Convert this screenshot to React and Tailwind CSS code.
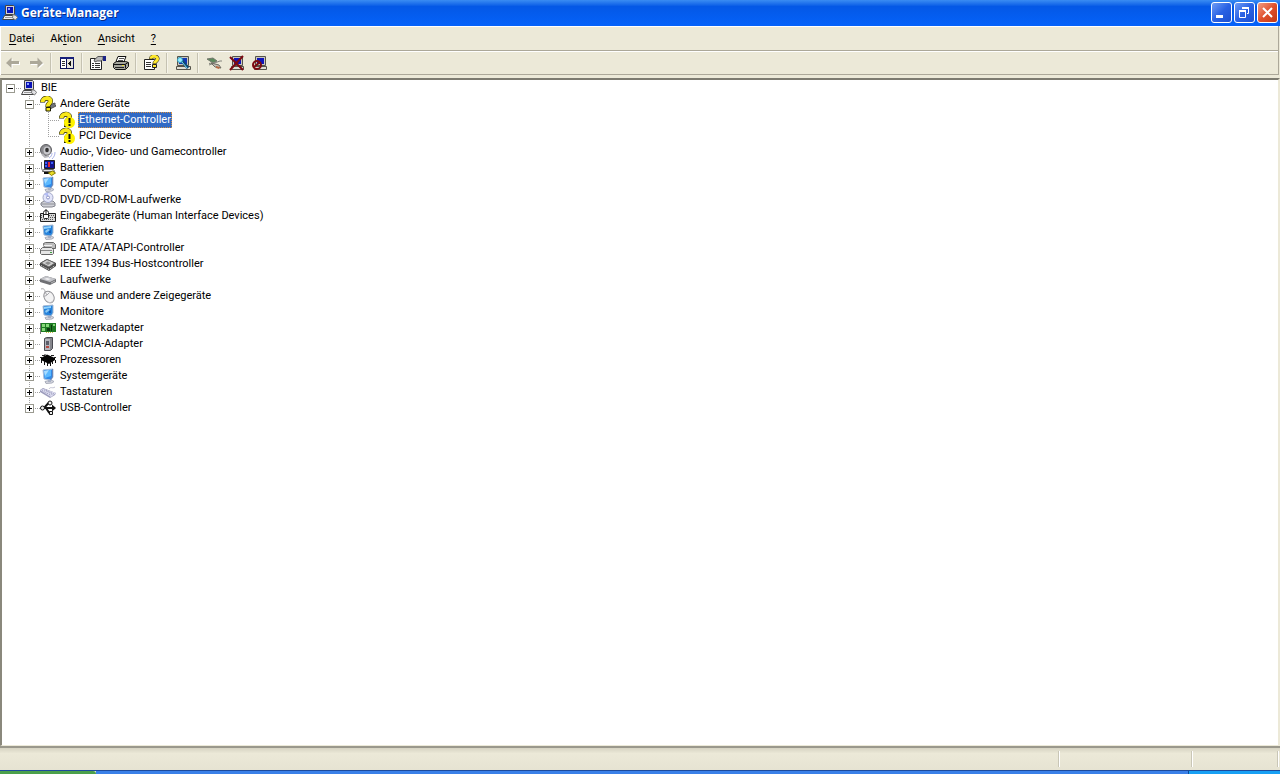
import { Fragment, useState } from "react"

const svgProps = { width: 16, height: 16, viewBox: "0 0 16 16", "aria-hidden": true, className: "block shrink-0" }

function PcIcon() {
  return (
    <svg {...svgProps}>
      <path d="M3.500 .5h8l1 1v8h-9z" fill="#d4d4d8" stroke="#444" />
      <path d="M5 2h6v6H5z" fill="#0a12b8" />
      <path d="M6 3h2v2H6z" fill="#8fa4ff" />
      <path d="M2.500 10.500h9l1.500 4H.5z" fill="#eeeef2" stroke="#444" />
      <path d="M3 12.500h8" stroke="#999" />
      <path d="M11 9.500l3 1 1.500 2-2 2.500-3-2z" fill="#e2e2e5" stroke="#777" />
    </svg>
  )
}

function UnknownIcon() {
  return (
    <svg {...svgProps}>
      <path d="M9 9l6-2v2l1 1-6 3z" fill="#70737c" stroke="#555" />
      <path d="M2.500 6.500C2.500 1 10.500 1 10.500 5C10.500 8 7.500 7 8 11" fill="none" stroke="#1c1c00" strokeWidth="5" />
      <path d="M6 11.500h4.500v3.500H6z" fill="#f8e71c" stroke="#1c1c00" />
      <path d="M2.500 6C2.500 1 10.500 1 10.500 5C10.500 8 7.500 7 8 10.500" fill="none" stroke="#f8e71c" strokeWidth="4" />
    </svg>
  )
}

function WarningIcon() {
  return (
    <svg {...svgProps} overflow="visible">
      <path d="M2.500 6.500C2.500 1 10.500 1 10.500 5C10.500 8 7.500 7 7.500 11V15" fill="none" stroke="#1c1c00" strokeWidth="5" />
      <path d="M2.500 6C2.500 1 10.500 1 10.500 5C10.500 8 7.500 7 7.500 11V14" fill="none" stroke="#f8e71c" strokeWidth="4" />
      <circle cx="10.500" cy="10.500" r="5.500" fill="#fff200" />
      <path d="M9.500 6h2v5h-2zM9.500 12h2v2h-2z" fill="#111" />
    </svg>
  )
}

function SpeakerIcon() {
  return (
    <svg {...svgProps}>
      <ellipse cx="6" cy="6" rx="5.500" ry="5.500" fill="#8b8b8f" stroke="#5c5c60" />
      <ellipse cx="7" cy="6.500" rx="3.500" ry="4" fill="#c8c8cc" />
      <ellipse cx="7" cy="6" rx="1.800" ry="2.200" fill="#333" />
      <path d="M2 10l3 3 4-1" fill="none" stroke="#b5b5ba" strokeWidth="2" />
      <path d="M9 14c2-1 3-3 3-5M12 15c2-2 3-4 3-7" fill="none" stroke="#a9b2e8" />
    </svg>
  )
}

function BatteryIcon() {
  return (
    <svg {...svgProps}>
      <path d="M1.500 2v6q0 3 3 3" fill="none" stroke="#777" />
      <path d="M4.500 .5h10v8h-10z" fill="#141490" stroke="#222" />
      <path d="M8 2h2v5H8z" fill="#e02838" />
      <path d="M5 2h2v2H5zM11 2h2v2h-2zM5 5h2v2H5z" fill="#3c64f8" />
      <path d="M3.500 9.500h10l1 2h-12z" fill="#e4e4e8" stroke="#666" />
      <path d="M4 13h5" stroke="#111" strokeWidth="2" />
      <path d="M8.500 13l4-2 3 2-4 2.500z" fill="#e8dc28" stroke="#8a7f00" />
    </svg>
  )
}

function StandShape() {
  return (
    <>
      <path d="M5 13.500l6-1.500 3 1.500-2 1.500-6 .5z" fill="#d5d7e0" stroke="#a9adbb" />
      <path d="M8 11h3v3H8z" fill="#aab0c2" />
    </>
  )
}

function MonitorIcon() {
  return (
    <svg {...svgProps}>
      <StandShape />
      <path d="M3 2l10-1v8l-2 3-7-1z" fill="#2f8ae8" stroke="#a7bddc" />
      <path d="M4 3l7-1v6l-6 2z" fill="#5ab8ff" />
      <path d="M4 3l5-1-4 6z" fill="#a8dcff" />
      <path d="M12.500 1v8l-2 3" fill="none" stroke="#6c86b5" />
    </svg>
  )
}

function DisplayIcon() {
  return (
    <svg {...svgProps}>
      <StandShape />
      <path d="M3 2l10-1v8l-2 3-7-1z" fill="#2583dc" stroke="#a0b6d2" />
      <path d="M4 3l7-1v2l-7 1z" fill="#8ed2ff" />
      <path d="M5 7l3-2 2 1-4 3z" fill="#8fcaf4" />
      <path d="M9 7l2-1v3H9z" fill="#125bb4" />
    </svg>
  )
}

function DiscIcon() {
  return (
    <svg {...svgProps}>
      <path d="M1 11l3-2h9l2 2v3l-3 1H3l-2-2z" fill="#cfd0d6" stroke="#84868f" />
      <path d="M1 12h14" stroke="#8e9099" />
      <circle cx="8" cy="5.500" r="5" fill="#e2e5fa" stroke="#a3a8c8" />
      <path d="M8 5L4 2a5 5 0 0 1 4-1z" fill="#b4bdf6" />
      <circle cx="8" cy="5.500" r="1.500" fill="#fff" stroke="#8c93c5" />
    </svg>
  )
}

function HidIcon() {
  return (
    <svg {...svgProps}>
      <path d="M.5 5.500h15v8H.5z" fill="#d8d8d8" stroke="#222" />
      <path d="M9 7.500h6M10 9.500h5M1 7.500h2M1 9.500h2M2 11.500h12" stroke="#555" strokeDasharray="1 1" />
      <path d="M3.500 4.500q0-2 2.500-2t2.500 2v5q0 1-1 1h-3q-1 0-1-1z" fill="#fff" stroke="#222" />
      <path d="M3.500 6.500h5M6 1v5" stroke="#222" />
    </svg>
  )
}

function IdeIcon() {
  return (
    <svg {...svgProps}>
      <path d="M3.500 3.500l2-1h8l2 2v4h-11z" fill="#bdbdbd" stroke="#666" />
      <path d="M4 5.500h8" stroke="#f2f2f2" />
      <path d="M.5 9.500l2-2h9l2 2v4l-1 1h-11l-1-1z" fill="#e6e6e6" stroke="#666" />
      <path d="M1 10.500h11" stroke="#888" />
      <path d="M10 12h2v1h-2z" fill="#3fa03f" />
    </svg>
  )
}

function FirewireIcon() {
  return (
    <svg {...svgProps}>
      <path d="M0 7l7-4 9 4v3l-7 5-9-5z" fill="#4a4a4a" />
      <path d="M1 7l6-3.500L15 7l-6 4z" fill="#d0d0d0" stroke="#666" />
      <path d="M5 7l3-1.500L11 7 8 9z" fill="#8d8d8d" />
      <path d="M1 9.500l8 4 6-4" fill="none" stroke="#ddd" strokeDasharray="1 1" />
    </svg>
  )
}

function DriveIcon() {
  return (
    <svg {...svgProps}>
      <path d="M0 7l6-3 10 3v3l-6 3-10-3z" fill="#6f7074" />
      <path d="M0 7l6-3 10 3-6 3z" fill="#c2c3c8" />
      <path d="M4 7l3-1 4 1-3 1z" fill="#f2f2f4" />
      <path d="M11 11l4-2" stroke="#b8b8bb" />
    </svg>
  )
}

function MouseIcon() {
  return (
    <svg {...svgProps}>
      <path d="M1 1c3-1 4 1 4 3" fill="none" stroke="#a5a5a8" />
      <ellipse cx="9" cy="9" rx="4.800" ry="6.200" transform="rotate(-32 9 9)" fill="#f3f3f4" stroke="#96969a" />
      <path d="M3.500 8.500q3 0 6-4M5 4l2 3" fill="none" stroke="#a8a8ad" />
      <path d="M7 14q4 2 6-1" fill="none" stroke="#c0c0c5" />
    </svg>
  )
}

function NetworkIcon() {
  return (
    <svg {...svgProps}>
      <path d="M.5 3v11" stroke="#777" />
      <path d="M1 3h15v9H1z" fill="#1d7a22" />
      <path d="M2 4h3v3H2zM6 4h3v3H6zM2 8h3v3H2zM13 4h2v2h-2z" fill="#86d878" />
      <path d="M7 8h3v3H7zM11 5h1v6h-1z" fill="#0b3a0d" />
      <path d="M6 12.500h8" stroke="#c9b84a" strokeDasharray="1 1" />
    </svg>
  )
}

function PcmciaIcon() {
  return (
    <svg {...svgProps}>
      <path d="M4.500 2.500l2-1h6v11l-2 2h-6z" fill="#85868c" stroke="#4a4b52" />
      <path d="M5 3h5v11H5z" fill="#b5b6bd" />
      <path d="M6 5h3v4H6z" fill="#5c5e6a" />
      <path d="M6 10h3v2H6z" fill="#b34a43" />
    </svg>
  )
}

function CpuIcon() {
  return (
    <svg {...svgProps}>
      <path d="M1 6l6-3.500L15 6v2l-6 4-8-4z" fill="#050505" />
      <path d="M1.500 8v3M4.500 9v4M7.500 11v3M10.500 11v3M12.500 9v3M15.500 8v3" stroke="#111" />
      <path d="M0 5.500h3M2 3.500h3M11 3.500h3M14 5.500h2M5 2v1" stroke="#222" />
    </svg>
  )
}

function KeyboardIcon() {
  return (
    <svg {...svgProps}>
      <path d="M0 6l3-2 13 5-1 2-5 3L0 8z" fill="#9c9cbc" />
      <path d="M0 6l4-1 12 4-5 4z" fill="#dfdff2" />
      <path d="M2 6.500l9 5M4 5.800l9 5M6 6l8 4" stroke="#8f8fb4" strokeDasharray="1 1" />
      <path d="M9 5c2-3 3 0 6-2" fill="none" stroke="#c3c3d4" />
    </svg>
  )
}

function UsbIcon() {
  return (
    <svg {...svgProps}>
      <path d="M2 8h11M4 8l4-4.500h3M6 8l3 4.500h2" fill="none" stroke="#111" strokeWidth="2" />
      <path d="M12 4.500L16 8l-4 3.500z" fill="#111" />
      <circle cx="2.500" cy="8" r="2" fill="#eee" stroke="#111" />
      <circle cx="10" cy="3" r="2" fill="#eee" stroke="#111" />
      <path d="M9.500 11.500h3v3h-3z" fill="#eee" stroke="#111" />
    </svg>
  )
}

function ArrowIcon({ flip }) {
  const head = flip ? "M15 8L9.500 2.500V6H2v3h7.500v4z" : "M1 8l5.500-5.500V6H14v3H6.500v4z"
  return (
    <svg {...svgProps}>
      <path d={head} transform="translate(1 1)" fill="#fff" />
      <path d={head} fill="#aca899" />
    </svg>
  )
}

function PanelIcon() {
  return (
    <svg {...svgProps} shapeRendering="crispEdges">
      <path d="M1.500 2.500h13v11h-13z" fill="#fff" stroke="#0c1258" />
      <path d="M1 2h14v2H1z" fill="#18207a" />
      <path d="M7.500 4v9" stroke="#0c1258" />
      <path d="M3 6.500h3M3 8.500h3M3 10.500h3" stroke="#333" />
      <path d="M8 4h6v9H8z" fill="#e6e4da" />
      <path d="M12 5v7L9 8.500z" fill="#111" />
    </svg>
  )
}

function PropertiesIcon() {
  return (
    <svg {...svgProps}>
      <path d="M.5 3.500h11v11H.5z" fill="#fff" stroke="#222" />
      <path d="M2 8.500h2M5 8.500h5M2 10.500h2M5 10.500h5M2 12.500h2M5 12.500h5" stroke="#333" />
      <path d="M4 5l4-3.500h5v3l-2 1.500H7L5 7z" fill="#b9b9b9" stroke="#555" />
      <path d="M13 1h3v5h-3z" fill="#1c2488" />
    </svg>
  )
}

function PrinterIcon() {
  return (
    <svg {...svgProps}>
      <path d="M5 1.500h8l-2 5H3z" fill="#fff" stroke="#111" />
      <path d="M6 3.500h5M5 5.500h5" stroke="#555" />
      <path d="M.5 8.500l3-2h9l3 1v4l-3 3h-10l-2-2z" fill="#a5a59c" stroke="#111" />
      <path d="M1 9.500h11l3-2M12.500 9.500v4" fill="none" stroke="#111" />
      <path d="M2 12.500h9" stroke="#222" />
      <path d="M9 10h2v1H9z" fill="#f0e030" />
    </svg>
  )
}

function HelpIcon() {
  return (
    <svg {...svgProps}>
      <path d="M.5 4.500h10v10H.5z" fill="#fff" stroke="#222" />
      <path d="M2 7.500h5M2 9.500h5M2 11.500h5" stroke="#333" />
      <path d="M7 4c0-4 7-3 6.500 0c0 2-3 2-3 5" fill="none" stroke="#222" strokeWidth="4" />
      <path d="M8.500 9.500h4v3h-4z" fill="#ffe92e" stroke="#222" />
      <path d="M7 3.800c0-3.800 7-2.800 6.500 .2c0 2-3 2-3 4.500" fill="none" stroke="#ffe92e" strokeWidth="3" />
    </svg>
  )
}

function ScreenShape() {
  return (
    <>
      <path d="M3.500 1.500h10v9h-10z" fill="#c9c7bd" stroke="#55534a" />
      <path d="M5 3h7v6H5z" fill="#1014b8" />
      <path d="M2.500 11.500h12v3h-12z" fill="#e0ded4" stroke="#55534a" />
    </>
  )
}

function ScanIcon() {
  return (
    <svg {...svgProps}>
      <path d="M2.500 1.500h11v9h-11z" fill="#c9c7bd" stroke="#55534a" />
      <path d="M4 3h8v6H4z" fill="#1238b4" />
      <path d="M1.500 11.500h14v3h-14z" fill="#e0ded4" stroke="#55534a" />
      <path d="M7 6l6 7" stroke="#0d4b74" strokeWidth="3" />
      <circle cx="5" cy="5" r="2.500" fill="#9cecff" stroke="#2f9ec0" />
      <path d="M7 7l5 6" stroke="#7ed8f4" />
    </svg>
  )
}

function UpdateIcon() {
  return (
    <svg {...svgProps}>
      <path d="M1 4l6-1 4 3-4 2z" fill="#5c8a5c" stroke="#73786c" />
      <path d="M3 10l11-4h2M3 8.500l6-1" fill="none" stroke="#85857e" />
      <path d="M5 8l8 2 2 3-6-1z" fill="#c4c2b8" stroke="#6e6c63" />
      <path d="M10 11l4 1-1 2-3-1z" fill="#b66a45" />
    </svg>
  )
}

function UninstallIcon() {
  return (
    <svg {...svgProps}>
      <ScreenShape />
      <path d="M1 2l13 13M14 1L1 15" stroke="#7c0a12" strokeWidth="2" />
    </svg>
  )
}

function DisableIcon() {
  return (
    <svg {...svgProps}>
      <ScreenShape />
      <circle cx="5" cy="10" r="4" fill="none" stroke="#7c0a12" strokeWidth="2" />
      <path d="M2 12l6-5" stroke="#7c0a12" strokeWidth="2" />
    </svg>
  )
}

const menus = [
  { key: "D", rest: "atei" },
  { pre: "Ak", key: "t", rest: "ion" },
  { key: "A", rest: "nsicht" },
  { key: "?" },
]

const toolGroups = [
  [
    { label: "Zurück", icon: <ArrowIcon />, disabled: true },
    { label: "Vorwärts", icon: <ArrowIcon flip />, disabled: true },
  ],
  [{ label: "Konsolenstruktur", icon: <PanelIcon /> }],
  [
    { label: "Eigenschaften", icon: <PropertiesIcon /> },
    { label: "Drucken", icon: <PrinterIcon /> },
  ],
  [{ label: "Hilfe", icon: <HelpIcon /> }],
  [{ label: "Nach geänderter Hardware suchen", icon: <ScanIcon /> }],
  [
    { label: "Treiber aktualisieren", icon: <UpdateIcon /> },
    { label: "Deinstallieren", icon: <UninstallIcon /> },
    { label: "Deaktivieren", icon: <DisableIcon /> },
  ],
]

const tree = {
  name: "BIE",
  icon: PcIcon,
  children: [
    {
      name: "Andere Geräte",
      icon: UnknownIcon,
      children: [
        { name: "Ethernet-Controller", icon: WarningIcon },
        { name: "PCI Device", icon: WarningIcon },
      ],
    },
    { name: "Audio-, Video- und Gamecontroller", icon: SpeakerIcon, closed: true },
    { name: "Batterien", icon: BatteryIcon, closed: true },
    { name: "Computer", icon: MonitorIcon, closed: true },
    { name: "DVD/CD-ROM-Laufwerke", icon: DiscIcon, closed: true },
    { name: "Eingabegeräte (Human Interface Devices)", icon: HidIcon, closed: true },
    { name: "Grafikkarte", icon: DisplayIcon, closed: true },
    { name: "IDE ATA/ATAPI-Controller", icon: IdeIcon, closed: true },
    { name: "IEEE 1394 Bus-Hostcontroller", icon: FirewireIcon, closed: true },
    { name: "Laufwerke", icon: DriveIcon, closed: true },
    { name: "Mäuse und andere Zeigegeräte", icon: MouseIcon, closed: true },
    { name: "Monitore", icon: DisplayIcon, closed: true },
    { name: "Netzwerkadapter", icon: NetworkIcon, closed: true },
    { name: "PCMCIA-Adapter", icon: PcmciaIcon, closed: true },
    { name: "Prozessoren", icon: CpuIcon, closed: true },
    { name: "Systemgeräte", icon: MonitorIcon, closed: true },
    { name: "Tastaturen", icon: KeyboardIcon, closed: true },
    { name: "USB-Controller", icon: UsbIcon, closed: true },
  ],
}

// One 19px indent column: dotted guide lines and, optionally, the plus/minus box.
function Guide({ up, down, across, box }) {
  return (
    <svg width="19" height="16" viewBox="0 0 19 16" shapeRendering="crispEdges" aria-hidden="true" className="block shrink-0">
      <g stroke="#a0a0a0" strokeDasharray="1 1" fill="none">
        {up && <path d="M8.500 0v8" />}
        {down && <path d="M8.500 8v8" />}
        {across && <path d="M8 8.500h11" />}
      </g>
      {box && (
        <>
          <path d="M4.500 4.500h8v8h-8z" fill="#fff" stroke="#9a9a90" />
          <path d={box === "plus" ? "M6 8.500h5M8.500 6v5" : "M6 8.500h5"} stroke="#000" />
        </>
      )}
    </svg>
  )
}

function TreeNode({ node, guides = [], root, last, selected, onSelect }) {
  const [open, setOpen] = useState(!node.closed)
  const Icon = node.icon
  const expandable = node.closed || node.children
  const isSelected = selected === node.name

  const guide = (
    <Guide up={!root} down={!last} across box={expandable && (open ? "minus" : "plus")} />
  )

  return (
    <li role="treeitem" aria-expanded={expandable ? open : undefined} aria-selected={isSelected}>
      <div className="flex h-4 items-center">
        {guides.map((line, i) => (
          <Guide key={i} up={line} down={line} />
        ))}
        {expandable ? (
          <button type="button" aria-label={`${node.name} umschalten`} onClick={() => setOpen(!open)}>
            {guide}
          </button>
        ) : (
          guide
        )}
        <Icon />
        <button
          type="button"
          onClick={() => onSelect(node.name)}
          className={
            isSelected
              ? "ml-[3px] h-4 whitespace-nowrap bg-[#316ac5] px-px leading-4 text-white outline-1 -outline-offset-1 outline-dotted outline-[#d89040]"
              : "ml-[3px] h-4 whitespace-nowrap px-px leading-4"
          }
        >
          {node.name}
        </button>
      </div>
      {open && node.children && (
        <ul role="group">
          {node.children.map((child, i) => (
            <TreeNode
              key={child.name}
              node={child}
              guides={[...guides, !last]}
              last={i === node.children.length - 1}
              selected={selected}
              onSelect={onSelect}
            />
          ))}
        </ul>
      )}
    </li>
  )
}

function TitleBar() {
  const blue =
    "size-[21px] rounded-[3px] border border-white bg-linear-to-br from-[#6f9bf5] via-[#2a62e4] to-[#1c4fd0]"
  return (
    <header className="flex h-[26px] shrink-0 items-center bg-linear-to-b from-[#3a8cf2] via-[#0458e6] via-25% to-[#0562fa] px-[2px] pb-px">
      <PcIcon />
      <h1 className="ml-[3px] flex-1 font-['Open_Sans',sans-serif] text-[12px] leading-4 font-bold text-white [text-shadow:1px_1px_0_#0a2a86]">
        Geräte-Manager
      </h1>
      <div className="flex gap-[2px]">
        <button type="button" aria-label="Minimieren" className={blue}>
          <svg width="19" height="19" viewBox="0 0 19 19" className="block">
            <path d="M4 12h7v3H4z" fill="#fff" />
          </svg>
        </button>
        <button type="button" aria-label="Verkleinern" className={blue}>
          <svg width="19" height="19" viewBox="0 0 19 19" className="block" fill="none" stroke="#fff">
            <path d="M4.500 8v6.500h6V8M7.500 6V4.500h6v6H12" />
            <path d="M4 8h7M7 5h7" strokeWidth="2" />
          </svg>
        </button>
        <button
          type="button"
          aria-label="Schließen"
          className="size-[21px] rounded-[3px] border border-white bg-linear-to-br from-[#f09a80] via-[#e0502c] to-[#c23a16]"
        >
          <svg width="19" height="19" viewBox="0 0 19 19" className="block">
            <path d="M5 5l9 9M14 5l-9 9" stroke="#fff" strokeWidth="2" />
          </svg>
        </button>
      </div>
    </header>
  )
}

export default function App() {
  const [selected, setSelected] = useState("Ethernet-Controller")

  return (
    <div className="flex h-screen flex-col bg-[#ece9d8] font-['Roboto',sans-serif] text-[11px] text-black">
      <TitleBar />

      <div className="mr-px shrink-0 border-l border-r border-l-white border-r-[#aca899]">
        <nav className="flex h-[25px] items-center gap-4 border-b border-t border-b-[#aca899] border-t-white pl-2 pt-px">
          {menus.map((menu) => (
            <button type="button" key={menu.key}>
              {menu.pre}
              <span className="underline underline-offset-2">{menu.key}</span>
              {menu.rest}
            </button>
          ))}
        </nav>
        <div role="toolbar" className="flex h-6 items-center border-b border-t border-b-[#aca899] border-t-white">
          {toolGroups.map((group, i) => (
            <Fragment key={i}>
              {i > 0 && <span className="mx-[3px] h-5 w-[2px] border-l border-r border-l-[#c5c2b2] border-r-[#f6f4ea]" />}
              {group.map((tool) => (
                <button
                  type="button"
                  key={tool.label}
                  aria-label={tool.label}
                  disabled={tool.disabled}
                  className="flex h-full w-[23px] items-center justify-center"
                >
                  {tool.icon}
                </button>
              ))}
            </Fragment>
          ))}
        </div>
      </div>

      <main className="mt-[3px] min-h-0 flex-1 overflow-auto border-l-2 border-r-2 border-t-2 border-b border-b-[#ece9d8] border-l-[#8a887c] border-r-[#ece9d8] border-t-[#7d7b70] bg-white">
        <ul role="tree" aria-label="Geräte">
          <TreeNode node={tree} root last selected={selected} onSelect={setSelected} />
        </ul>
      </main>

      <footer className="flex h-6 shrink-0 justify-end border-t-2 border-[#9a988c] bg-linear-to-b from-[#d6d3c2] via-[#ece9d8] via-25% to-[#e6e3d2] py-[3px]">
        <span className="w-[133px] border-l border-[#c9c6b6] shadow-[inset_1px_0_0_#fff]" />
        <span className="w-[86px] border-l border-[#c9c6b6] shadow-[inset_1px_0_0_#fff]" />
        <span className="w-[3px] border-l border-[#c9c6b6] shadow-[inset_1px_0_0_#fff]" />
      </footer>

      <div className="flex h-1 shrink-0 border-t border-[#1c4a9c]">
        <div className="w-24 rounded-tr-[3px] bg-[#4ba04b]" />
        <div className="flex-1 bg-[#3a80e8]" />
        <div className="w-[92px] border-l border-[#0b4a9a] bg-[#18a0f4]" />
      </div>
    </div>
  )
}
